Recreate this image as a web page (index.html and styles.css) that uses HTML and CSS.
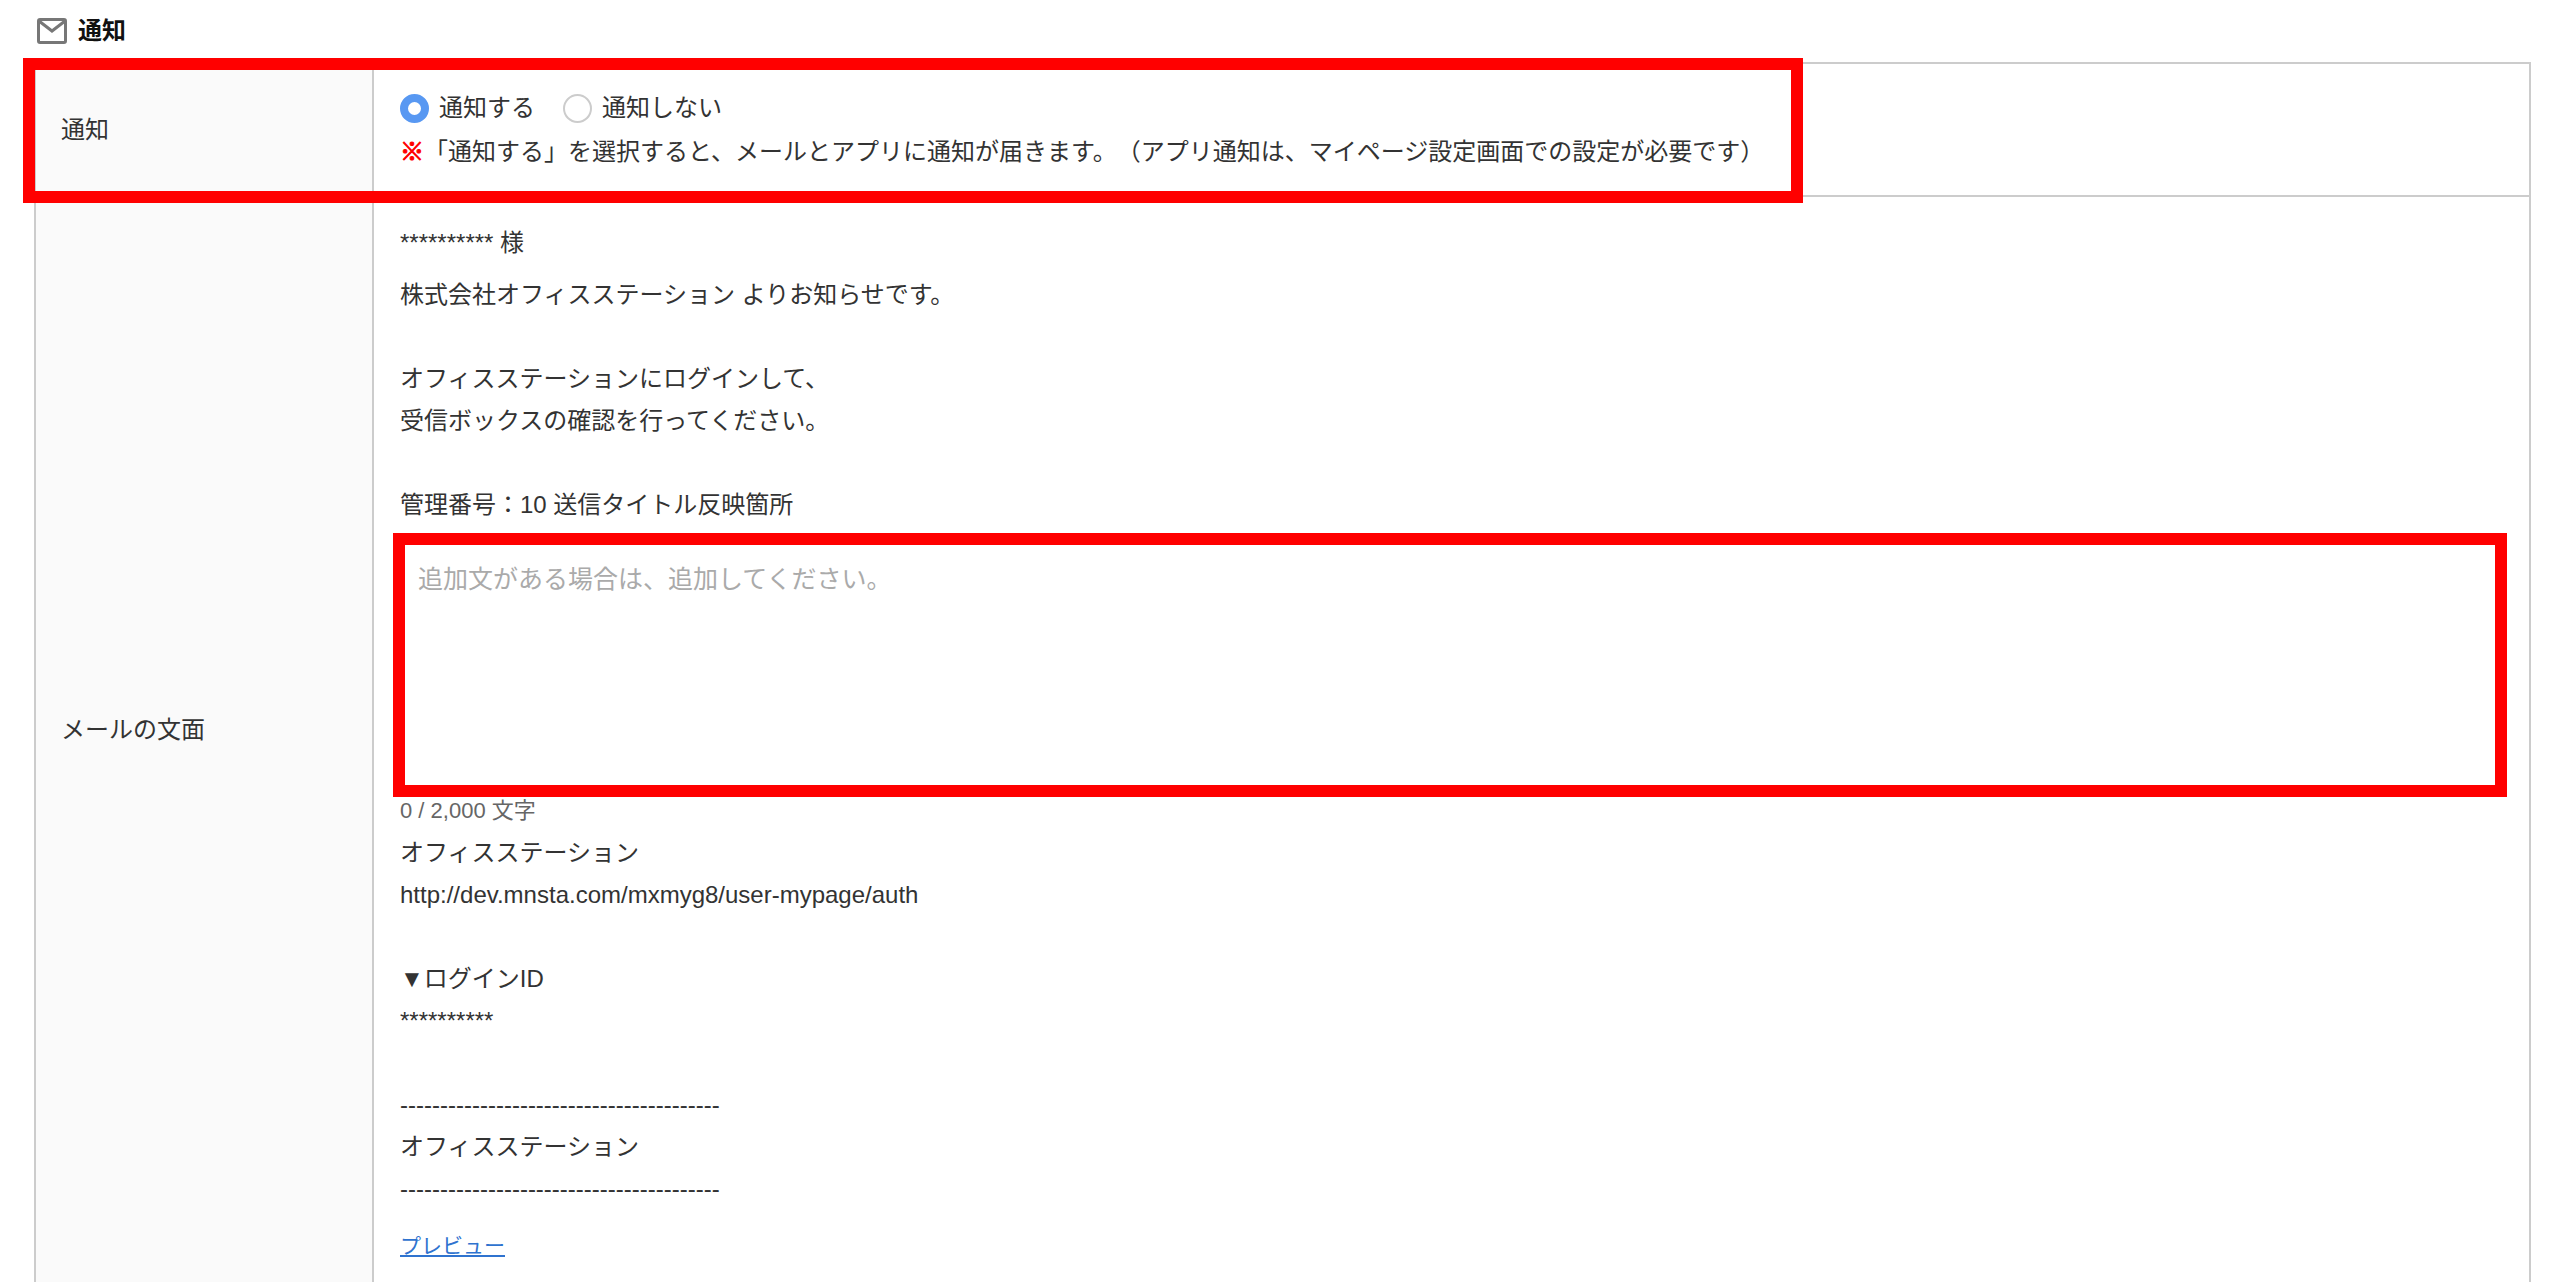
FILE: index.html
```html
<!DOCTYPE html>
<html lang="ja">
<head>
    <meta charset="UTF-8">
    <meta name="viewport" content="width=device-width, initial-scale=1.0">
    <title>通知</title>
    <link rel="stylesheet" href="styles.css">
</head>
<body>
    <div class="container">
        <h2 class="section-title">
            <svg class="mail-icon" viewBox="0 0 30 26" aria-hidden="true">
                <rect x="1.5" y="1.5" width="27" height="23" rx="1.5" fill="none" stroke="#777" stroke-width="3"/>
                <path d="M2 3 L15 13 L28 3" fill="none" stroke="#777" stroke-width="3"/>
            </svg>
            通知
        </h2>
        <div class="table-wrap">
            <table class="form-table">
                <tr>
                    <th scope="row">通知</th>
                    <td>
                        <div class="radio-group">
                            <label for="notifyOn"><input type="radio" id="notifyOn" name="notify" checked>通知する</label>
                            <label for="notifyOff"><input type="radio" id="notifyOff" name="notify">通知しない</label>
                        </div>
                        <p><span class="mark">※</span>「通知する」を選択すると、メールとアプリに通知が届きます。（アプリ通知は、マイページ設定画面での設定が必要です）</p>
                    </td>
                </tr>
                <tr class="mail-row">
                    <th scope="row"><label for="addText">メールの文面</label></th>
                    <td>
                        <p class="greeting">********** 様</p>
                        <p>
                            株式会社オフィスステーション よりお知らせです。<br>
                            <br>
                            オフィスステーションにログインして、<br>
                            受信ボックスの確認を行ってください。<br>
                            <br>
                            管理番号：10 送信タイトル反映箇所
                        </p>
                        <div class="textarea-wrap">
                            <textarea id="addText" placeholder="追加文がある場合は、追加してください。"></textarea>
                        </div>
                        <p class="counter">0 / 2,000 文字</p>
                        <p>
                            オフィスステーション<br>
                            http://dev.mnsta.com/mxmyg8/user-mypage/auth<br>
                            <br>
                            ▼ログインID<br>
                            **********<br>
                            <br>
                            ----------------------------------------<br>
                            オフィスステーション<br>
                            ----------------------------------------
                        </p>
                        <p class="preview"><a href="#">プレビュー</a></p>
                    </td>
                </tr>
            </table>
            <!-- 通知行の強調枠 -->
            <div class="highlight"></div>
        </div>
    </div>
</body>
</html>
```
FILE: styles.css
```css
* {
    box-sizing: border-box;
}
body {
    margin: 0;
    background: #fff;
    color: #333;
    font-family: "Liberation Sans", "Noto Sans CJK JP", sans-serif;
    font-size: 24px;
    line-height: 42px;
    text-spacing-trim: space-all;
}
p {
    margin: 0;
}
.container {
    padding: 0 29px 0 34px;
}
.section-title {
    display: flex;
    align-items: center;
    gap: 11px;
    height: 62px;
    margin: 0;
    padding-left: 3px;
    color: #111;
    font-size: 24px;
}
.mail-icon {
    width: 30px;
    height: 26px;
}
.table-wrap {
    position: relative;
}
.form-table {
    width: 100%;
    border-spacing: 0;
    border-top: 2px solid #ccc;
    border-left: 2px solid #ccc;
}
th, td {
    padding: 23px 26px 22px;
    border-right: 2px solid #ccc;
    border-bottom: 2px solid #ccc;
    text-align: left;
}
th {
    width: 338px;
    padding-left: 25px;
    background: #fafafa;
    font-weight: normal;
}
.radio-group {
    display: flex;
    gap: 28px;
    margin-bottom: 2px;
}
.radio-group label {
    display: flex;
    align-items: center;
    gap: 10px;
}
input[type="radio"] {
    appearance: none;
    width: 29px;
    height: 29px;
    margin: 0;
    border: 2px solid #ccc;
    border-radius: 50%;
    background: #fff;
}
input[type="radio"]:checked {
    border: 8px solid #5898f2;
}
.mark {
    color: #f00;
    font-weight: bold;
    -webkit-text-stroke: 1px #f00;
}
.mail-row th {
    padding: 0 26px 20px 25px;
    border-bottom: none;
}
.mail-row td {
    padding: 25px 26px 15px;
    border-bottom: none;
}
.greeting {
    margin-bottom: 10px;
}
.textarea-wrap {
    position: relative;
    height: 250px;
    margin-top: 14px;
}
/* 入力欄の強調枠 */
.textarea-wrap::after {
    content: "";
    position: absolute;
    inset: -7px -4px -7px -7px;
    border: 12px solid #f00;
    pointer-events: none;
}
textarea {
    display: block;
    width: 100%;
    height: 100%;
    padding: 17px;
    border: 1px solid #ccc;
    color: #333;
    font-family: inherit;
    font-size: 25px;
    line-height: 42px;
    resize: none;
}
textarea::placeholder {
    color: #aaa;
}
.counter {
    color: #666;
    font-size: 22px;
}
.preview {
    margin-top: 15px;
    font-size: 21px;
}
.preview a {
    color: #2f73cf;
}
.highlight {
    position: absolute;
    top: -4px;
    left: -11px;
    width: 1780px;
    height: 145px;
    border: 12px solid #f00;
    pointer-events: none;
}
```
